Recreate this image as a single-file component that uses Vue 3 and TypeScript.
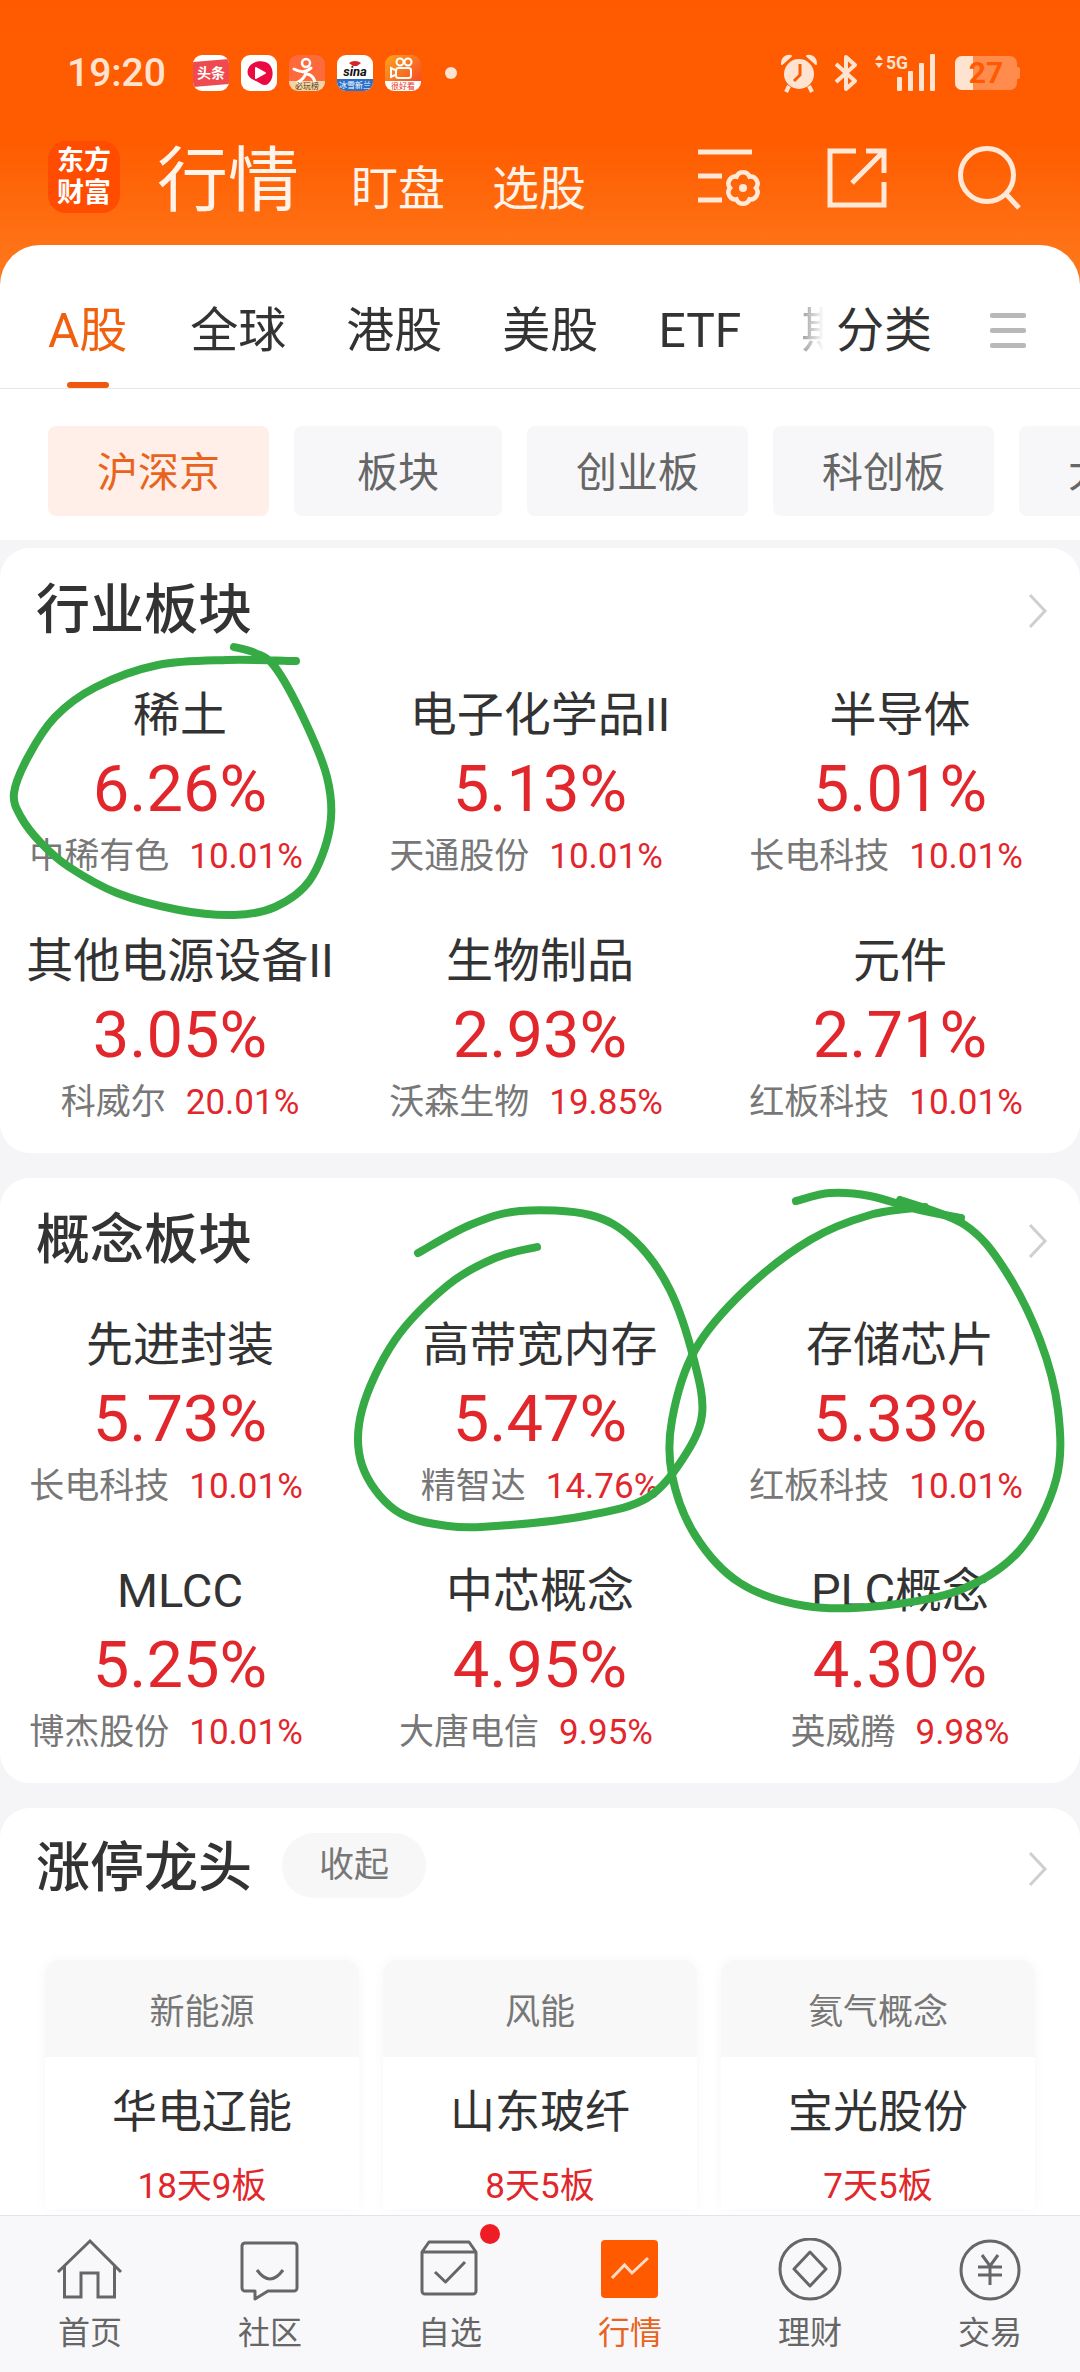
<script setup lang="ts">
type Quote = { name: string; pct: string; stock: string; stockPct: string }
type Lead = { group: string; name: string; streak: string }
type Pt = [number, number]

const tabs = ['全球', '港股', '美股', 'ETF', '期货']
const chips = ['板块', '创业板', '科创板', '大盘云图']

const industry: Quote[] = [
  { name: '稀土', pct: '6.26%', stock: '中稀有色', stockPct: '10.01%' },
  { name: '电子化学品II', pct: '5.13%', stock: '天通股份', stockPct: '10.01%' },
  { name: '半导体', pct: '5.01%', stock: '长电科技', stockPct: '10.01%' },
  { name: '其他电源设备II', pct: '3.05%', stock: '科威尔', stockPct: '20.01%' },
  { name: '生物制品', pct: '2.93%', stock: '沃森生物', stockPct: '19.85%' },
  { name: '元件', pct: '2.71%', stock: '红板科技', stockPct: '10.01%' }
]

const concept: Quote[] = [
  { name: '先进封装', pct: '5.73%', stock: '长电科技', stockPct: '10.01%' },
  { name: '高带宽内存', pct: '5.47%', stock: '精智达', stockPct: '14.76%' },
  { name: '存储芯片', pct: '5.33%', stock: '红板科技', stockPct: '10.01%' },
  { name: 'MLCC', pct: '5.25%', stock: '博杰股份', stockPct: '10.01%' },
  { name: '中芯概念', pct: '4.95%', stock: '大唐电信', stockPct: '9.95%' },
  { name: 'PLC概念', pct: '4.30%', stock: '英威腾', stockPct: '9.98%' }
]

const leaders: Lead[] = [
  { group: '新能源', name: '华电辽能', streak: '18天9板' },
  { group: '风能', name: '山东玻纤', streak: '8天5板' },
  { group: '氦气概念', name: '宝光股份', streak: '7天5板' }
]

// hand-drawn marks on the photo, smoothed through the sampled points
function smooth(pts: Pt[]): string {
  let d = `M${pts[0][0]} ${pts[0][1]}`
  for (let i = 0; i < pts.length - 1; i++) {
    const p0 = pts[Math.max(i - 1, 0)]
    const p1 = pts[i]
    const p2 = pts[i + 1]
    const p3 = pts[Math.min(i + 2, pts.length - 1)]
    const c1x = p1[0] + (p2[0] - p0[0]) / 6
    const c1y = p1[1] + (p2[1] - p0[1]) / 6
    const c2x = p2[0] - (p3[0] - p1[0]) / 6
    const c2y = p2[1] - (p3[1] - p1[1]) / 6
    d += ` C${c1x.toFixed(1)} ${c1y.toFixed(1)} ${c2x.toFixed(1)} ${c2y.toFixed(1)} ${p2[0]} ${p2[1]}`
  }
  return d
}

const marks = [
  smooth([[234, 647], [255, 653], [275, 667], [303, 717], [327, 777], [330, 827], [310, 880], [275, 907], [234, 915], [179, 910], [117, 893], [69, 867], [41, 843], [21, 817], [14, 793], [28, 757], [55, 717], [96, 687], [158, 665], [227, 660], [296, 661]]),
  smooth([[537, 1247], [495, 1258], [448, 1285], [395, 1340], [362, 1410], [362, 1465], [395, 1510], [448, 1526], [510, 1525], [590, 1515], [647, 1498], [682, 1460], [702, 1415], [694, 1360], [670, 1290], [634, 1240], [590, 1215], [520, 1211], [470, 1225], [418, 1253]]),
  smooth([[796, 1201], [830, 1193], [870, 1196], [916, 1209], [961, 1218]]),
  smooth([[925, 1207], [870, 1215], [810, 1240], [745, 1290], [695, 1350], [672, 1420], [672, 1475], [695, 1535], [740, 1583], [806, 1606], [880, 1606], [960, 1590], [1020, 1550], [1056, 1480], [1058, 1410], [1040, 1340], [1005, 1270], [965, 1225], [900, 1200]])
]
</script>

<template>
  <div class="page">
    <div class="scroll">
      <header class="top">
        <div class="status">
          <span class="time">19:20</span>
          <div class="apps">
            <svg class="app" viewBox="0 0 36 36">
              <rect width="36" height="36" fill="#fff" />
              <path d="M0 7 L36 4 V29 L0 32Z" fill="#ee4a50" />
              <text x="18" y="23" text-anchor="middle" font-size="14" font-weight="700" fill="#fff">头条</text>
            </svg>
            <svg class="app" viewBox="0 0 36 36">
              <rect width="36" height="36" fill="#fff" />
              <path d="M7 14 C10 6 22 4 28 9 C33 14 33 24 27 29 C23 32 19 28 15 26 C10 24 5 21 7 14Z" fill="#ea0a40" />
              <path d="M15 13 L24 18 L15 23Z" fill="#fff" stroke="#fff" stroke-width="2" stroke-linejoin="round" />
            </svg>
            <svg class="app" viewBox="0 0 36 36">
              <rect width="36" height="36" fill="#ff6a3c" />
              <rect y="26" width="36" height="10" fill="#f0d5a8" />
              <circle cx="17" cy="8" r="4" fill="none" stroke="#fff" stroke-width="2.5" />
              <path d="M5 14 C12 18 18 17 22 13 M17 17 C16 22 13 25 9 27 M18 19 C23 20 25 23 26 27" fill="none" stroke="#fff" stroke-width="3" stroke-linecap="round" />
              <text x="18" y="34" text-anchor="middle" font-size="8" fill="#5a3a10">必玩榜</text>
            </svg>
            <svg class="app" viewBox="0 0 36 36">
              <rect width="36" height="36" fill="#fff" />
              <rect y="24" width="36" height="12" fill="#2a6fc8" />
              <path d="M12 8 A8 6 0 0 1 24 8 L20 11 H16Z" fill="#d8232a" />
              <text x="18" y="21" text-anchor="middle" font-size="13" font-weight="700" font-style="italic" fill="#111">sina</text>
              <text x="18" y="33" text-anchor="middle" font-size="8" fill="#fff">冰雪新兰</text>
            </svg>
            <svg class="app" viewBox="0 0 36 36">
              <defs>
                <linearGradient id="ks" x1="0" y1="0" x2="1" y2="1">
                  <stop offset="0" stop-color="#ffa21a" />
                  <stop offset="1" stop-color="#f3402a" />
                </linearGradient>
              </defs>
              <rect width="36" height="36" fill="url(#ks)" />
              <rect y="26" width="36" height="10" fill="#fff" />
              <circle cx="15" cy="7" r="3.5" fill="none" stroke="#fff" stroke-width="2" />
              <circle cx="23" cy="7" r="3.5" fill="none" stroke="#fff" stroke-width="2" />
              <rect x="11" y="13" width="15" height="10" rx="2.5" fill="none" stroke="#fff" stroke-width="2" />
              <path d="M10 15 L6 13 V22 L10 20" fill="none" stroke="#fff" stroke-width="2" />
              <text x="18" y="34" text-anchor="middle" font-size="8" fill="#e8352a">很好看</text>
            </svg>
            <span class="dot"></span>
          </div>
          <div class="sys">
            <svg class="alarm" width="38" height="40" viewBox="0 0 38 40">
              <path d="M2 11 C2 5 6 2 11 3 Z M36 11 C36 5 32 2 27 3 Z" fill="#ffe3d1" stroke="#ffe3d1" stroke-width="2" stroke-linejoin="round" />
              <circle cx="19" cy="21" r="15" fill="#ffe3d1" />
              <path d="M20 11 V22 L14 28" fill="none" stroke="#ff5c00" stroke-width="3" />
              <path d="M9 33 L6 39 M29 33 L32 39" stroke="#ffe3d1" stroke-width="4" />
            </svg>
            <svg class="bt" width="24" height="38" viewBox="0 0 24 38">
              <path d="M2 10 L21 27 L12 35 V3 L21 11 L2 28" fill="none" stroke="#ffe3d1" stroke-width="4" stroke-linejoin="round" />
            </svg>
            <svg class="net" width="66" height="40" viewBox="0 0 66 40">
              <path d="M3 7 L7 2 L11 7Z M3 10 L7 15 L11 10Z" fill="#ffe3d1" />
              <text x="14" y="16" font-size="19" font-weight="700" textLength="22" lengthAdjust="spacingAndGlyphs" fill="#ffe3d1">5G</text>
              <rect x="25" y="24" width="5" height="14" rx="1" fill="#ffe3d1" />
              <rect x="36" y="18" width="5" height="20" rx="1" fill="#ffe3d1" />
              <rect x="47" y="10" width="5" height="28" rx="1" fill="#ffe3d1" />
              <rect x="58" y="1" width="5" height="37" rx="1" fill="#ffe3d1" />
            </svg>
            <div class="battery">
              <div class="cell-body">
                <span class="level"></span>
                <span class="num">27</span>
              </div>
              <i class="nub"></i>
            </div>
          </div>
        </div>

        <div class="bar">
          <div class="logo">东方<br />财富</div>
          <span class="big">行情</span>
          <span class="sub-nav first">盯盘</span>
          <span class="sub-nav">选股</span>
          <div class="actions">
            <svg width="66" height="62" viewBox="0 0 66 62" fill="none" stroke="#ffe8d8" stroke-width="5">
              <path d="M1 5 H55 M1 29 H25 M1 53 H25" />
              <path d="M59 41 A7 7 0 0 1 52.5 52.3 A7 7 0 0 1 39.5 52.3 A7 7 0 0 1 33 41 A7 7 0 0 1 39.5 29.7 A7 7 0 0 1 52.5 29.7 A7 7 0 0 1 59 41Z" stroke-width="4.5" />
              <circle cx="46" cy="41" r="4" fill="#ffe8d8" stroke="none" />
            </svg>
            <svg width="60" height="60" viewBox="0 0 60 60" fill="none" stroke="#ffe8d8" stroke-width="5">
              <path d="M29 3 H3 V57 H57 V34 M39 3 H57 V25 M57 3 L25 35" />
            </svg>
            <svg class="find" width="66" height="64" viewBox="0 0 66 64" fill="none" stroke="#ffe8d8" stroke-width="5">
              <circle cx="30" cy="29" r="26.5" />
              <path d="M49 48 L62 62" />
            </svg>
          </div>
        </div>
      </header>

      <div class="sheet">
        <nav class="tabs">
          <div class="tab-scroll">
            <span class="tab on">A股</span>
            <span v-for="t in tabs" :key="t" class="tab">{{ t }}</span>
          </div>
          <span class="tab fixed">分类</span>
          <div class="more"><i></i><i></i><i></i></div>
        </nav>

        <div class="chips">
          <span class="chip on">沪深京</span>
          <span v-for="c in chips" :key="c" class="chip">{{ c }}</span>
        </div>
      </div>

      <section class="card">
        <div class="card-head">
          <h2>行业板块</h2>
          <svg class="chev" width="20" height="36" viewBox="0 0 20 36"><path d="M2 2 L17 18 L2 34" fill="none" stroke="#cfcfd2" stroke-width="3" /></svg>
        </div>
        <div class="grid">
          <div v-for="q in industry" :key="q.name" class="cell">
            <div class="name">{{ q.name }}</div>
            <div class="pct">{{ q.pct }}</div>
            <div class="lead" :class="{ long: q.stock.length > 3 }"><span>{{ q.stock }}</span><b>{{ q.stockPct }}</b></div>
          </div>
        </div>
      </section>

      <section class="card">
        <div class="card-head">
          <h2>概念板块</h2>
          <svg class="chev" width="20" height="36" viewBox="0 0 20 36"><path d="M2 2 L17 18 L2 34" fill="none" stroke="#cfcfd2" stroke-width="3" /></svg>
        </div>
        <div class="grid">
          <div v-for="q in concept" :key="q.name" class="cell">
            <div class="name">{{ q.name }}</div>
            <div class="pct">{{ q.pct }}</div>
            <div class="lead" :class="{ long: q.stock.length > 3 }"><span>{{ q.stock }}</span><b>{{ q.stockPct }}</b></div>
          </div>
        </div>
      </section>

      <section class="card last">
        <div class="card-head">
          <h2>涨停龙头</h2>
          <span class="fold">收起</span>
          <svg class="chev" width="20" height="36" viewBox="0 0 20 36"><path d="M2 2 L17 18 L2 34" fill="none" stroke="#cfcfd2" stroke-width="3" /></svg>
        </div>
        <div class="leaders">
          <div v-for="l in leaders" :key="l.name" class="leader">
            <div class="leader-head">{{ l.group }}</div>
            <div class="leader-name">{{ l.name }}</div>
            <div class="leader-streak">{{ l.streak }}</div>
          </div>
        </div>
      </section>
    </div>

    <footer class="nav">
      <div class="nav-item">
        <svg width="72" height="64" viewBox="0 0 72 64" fill="none" stroke="#666" stroke-width="3">
          <path d="M4 34 L36 3 L67 34 M10.5 28 V59 H27 V35 H44 V59 H60.5 V28" />
        </svg>
        <span>首页</span>
      </div>
      <div class="nav-item">
        <svg width="72" height="64" viewBox="0 0 72 64" fill="none" stroke="#666" stroke-width="3" stroke-linejoin="round">
          <path d="M11 5 H60 a3 3 0 0 1 3 3 V50 a3 3 0 0 1 -3 3 H34 L21 61 V53 H11 a3 3 0 0 1 -3 -3 V8 a3 3 0 0 1 3 -3Z" />
          <path d="M23 32 Q36 50 49 32" />
        </svg>
        <span>社区</span>
      </div>
      <div class="nav-item">
        <svg width="72" height="64" viewBox="0 0 72 64" fill="none" stroke="#666" stroke-width="3" stroke-linejoin="round">
          <path d="M15 4 H55 L62 14 V53 a3 3 0 0 1 -3 3 H11 a3 3 0 0 1 -3 -3 V14Z M8 14 H62" />
          <path d="M21 34 L31.5 44 L51 24" />
        </svg>
        <span>自选</span>
        <i class="badge"></i>
      </div>
      <div class="nav-item on">
        <svg width="72" height="64" viewBox="0 0 72 64" fill="none">
          <rect x="7" y="2" width="57" height="58" rx="4" fill="#ff5a00" />
          <path d="M18 40 L30.5 27 L38 35 L54 20" stroke="#ffdcc5" stroke-width="3" />
        </svg>
        <span>行情</span>
      </div>
      <div class="nav-item">
        <svg width="72" height="64" viewBox="0 0 72 64" fill="none" stroke="#666" stroke-width="3" stroke-linejoin="round">
          <circle cx="36" cy="31" r="30" />
          <path d="M36 14 L52 31 L36 48 L20 31Z" />
        </svg>
        <span>理财</span>
      </div>
      <div class="nav-item">
        <svg width="72" height="64" viewBox="0 0 72 64" fill="none" stroke="#666" stroke-width="3">
          <circle cx="36" cy="32" r="29" />
          <path d="M28 17 L36 28 L44 17 M24 29 H48 M24 37 H48 M36 28 V47" />
        </svg>
        <span>交易</span>
      </div>
    </footer>

    <svg class="ink" width="1080" height="2372" viewBox="0 0 1080 2372" fill="none">
      <path v-for="(d, i) in marks" :key="i" :d="d" stroke="#36ab45" stroke-width="8" stroke-linecap="round" />
    </svg>
  </div>
</template>

<style scoped>
.page {
  position: relative;
  width: 1080px;
  height: 2372px;
  display: flex;
  flex-direction: column;
  overflow: hidden;
  background: #f5f5f7;
  font-family: Roboto, "Noto Sans CJK SC", sans-serif;
  color: #333;
}

.scroll {
  flex: 1;
  min-height: 0;
  overflow: hidden;
}

.top {
  height: 285px;
  margin-bottom: -40px;
  padding-top: 54px;
  box-sizing: border-box;
  background: linear-gradient(180deg, #ff5a00 0%, #ff5c00 50%, #ff7a1e 100%);
}

.status {
  display: flex;
  align-items: center;
  height: 38px;
  padding: 0 60px 0 67px;
  color: #ffe3d1;
}

.time {
  width: 126px;
  font-size: 39px;
  font-weight: 500;
  line-height: 38px;
}

.apps {
  display: flex;
  align-items: center;
  gap: 12px;
}

.app {
  width: 36px;
  height: 36px;
  border-radius: 9px;
  overflow: hidden;
}

.dot {
  width: 12px;
  height: 12px;
  margin-left: 12px;
  border-radius: 50%;
  background: #ffe3d1;
}

.sys {
  margin-left: auto;
  display: flex;
  align-items: center;
}

.bt {
  margin-left: 16px;
}

.net {
  margin-left: 14px;
}

.battery {
  display: flex;
  align-items: center;
  margin-left: 17px;
}

.cell-body {
  position: relative;
  width: 62px;
  height: 34px;
  border-radius: 7px;
  background: rgba(255, 255, 255, 0.3);
  overflow: hidden;
}

.nub {
  width: 3px;
  height: 12px;
  border-radius: 0 2px 2px 0;
  background: rgba(255, 255, 255, 0.3);
}

.level {
  position: absolute;
  left: 0;
  top: 0;
  bottom: 0;
  width: 18px;
  background: #ffe3d1;
}

.num {
  position: absolute;
  inset: 0;
  text-align: center;
  font-size: 30px;
  font-weight: 700;
  line-height: 34px;
  color: #ff5a00;
}

.bar {
  display: flex;
  align-items: flex-end;
  height: 72px;
  margin-top: 49px;
  padding: 0 57px 0 48px;
  color: #fff3ea;
}

.logo {
  width: 72px;
  height: 72px;
  border-radius: 18px;
  background: #ff4c00;
  color: #fff;
  font-size: 27px;
  font-weight: 700;
  line-height: 32px;
  text-align: center;
  padding-top: 4px;
  box-sizing: border-box;
}

.big {
  position: relative;
  top: 10px;
  margin-left: 37px;
  font-size: 71px;
  font-weight: 400;
  line-height: 84px;
}

.sub-nav {
  position: relative;
  top: 6px;
  margin-left: 47px;
  font-size: 47px;
  font-weight: 400;
  line-height: 60px;
}

.sub-nav.first {
  margin-left: 52px;
}

.actions {
  margin-left: auto;
  display: flex;
  align-items: center;
  gap: 64px;
  height: 70px;
}

.find {
  margin-left: 6px;
}

.sheet {
  position: relative;
  height: 295px;
  border-radius: 40px 40px 0 0;
  background: #fff;
}

.tabs {
  display: flex;
  height: 144px;
  padding: 58px 54px 0 48px;
  box-sizing: border-box;
  border-bottom: 1px solid #e6e6e8;
}

.tab-scroll {
  display: flex;
  gap: 60px;
  width: 776px;
  overflow: hidden;
  -webkit-mask-image: linear-gradient(90deg, #000 94%, transparent 100%);
  mask-image: linear-gradient(90deg, #000 94%, transparent 100%);
}

.tab {
  position: relative;
  flex: none;
  font-size: 48px;
  line-height: 56px;
  height: 85px;
  color: #333;
}

.tab.on {
  margin-right: 3px;
  color: #f0600f;
}

.tab.on::after {
  content: "";
  position: absolute;
  left: 19px;
  bottom: 0;
  width: 42px;
  height: 6px;
  border-radius: 3px;
  background: #f0580f;
}

.tab.fixed {
  margin-left: 12px;
}

.more {
  margin-left: auto;
  display: flex;
  flex-direction: column;
  gap: 10px;
  padding-top: 10px;
}

.more i {
  display: block;
  width: 36px;
  height: 5px;
  border-radius: 2px;
  background: #b8b8b8;
}

.chips {
  display: flex;
  gap: 25px;
  padding: 37px 0 0 48px;
  overflow: hidden;
}

.chip {
  flex: none;
  height: 90px;
  padding: 0 49px;
  border-radius: 8px;
  background: #f7f7f9;
  color: #666;
  font-size: 41px;
  line-height: 95px;
  text-align: center;
}

.chip:nth-child(2) {
  padding: 0 63px;
}

.chip.on {
  background: #ffefe8;
  color: #e8641e;
}

.card {
  margin-top: 25px;
  height: 605px;
  border-radius: 30px;
  background: #fff;
}

.sheet + .card {
  margin-top: 8px;
}

.card.last {
  height: 520px;
}

.card-head {
  display: flex;
  align-items: center;
  height: 122px;
  padding: 3px 32px 0 36px;
  box-sizing: border-box;
}

.card.last .card-head {
  padding-top: 0;
}

h2 {
  margin: 0;
  font-size: 54px;
  font-weight: 500;
  line-height: 70px;
  color: #333;
}

.chev {
  margin-left: auto;
}

.grid {
  display: grid;
  grid-template-columns: repeat(3, 360px);
  row-gap: 37px;
}

.cell {
  display: flex;
  flex-direction: column;
  align-items: center;
  height: 209px;
  padding-top: 17px;
  box-sizing: border-box;
}

.name {
  font-size: 47px;
  line-height: 56px;
  color: #333;
  white-space: nowrap;
}

.pct {
  margin-top: 8px;
  font-size: 65px;
  line-height: 76px;
  color: #e1262c;
}

.lead {
  display: flex;
  gap: 20px;
  margin-top: 8px;
  font-size: 35px;
  line-height: 44px;
  color: #777;
  white-space: nowrap;
}

.lead.long {
  margin-right: 28px;
}

.lead b {
  font-weight: 400;
  color: #e1262c;
}

.fold {
  width: 144px;
  height: 65px;
  margin: -8px 0 0 30px;
  border-radius: 32px;
  background: #f7f7f7;
  color: #777;
  font-size: 35px;
  line-height: 65px;
  text-align: center;
}

.leaders {
  display: grid;
  grid-template-columns: repeat(3, 314px);
  column-gap: 24px;
  margin-top: 30px;
  padding-left: 45px;
}

.leader {
  border-radius: 14px 14px 0 0;
  box-shadow: 0 0 12px rgba(0, 0, 0, 0.04);
  text-align: center;
}

.leader-head {
  height: 97px;
  border-radius: 14px 14px 0 0;
  background: #f8f8f8;
  color: #777;
  font-size: 35px;
  line-height: 106px;
}

.leader-name {
  margin-top: 28px;
  font-size: 45px;
  line-height: 56px;
  color: #333;
}

.leader-streak {
  margin-top: 24px;
  font-size: 35px;
  line-height: 44px;
  color: #e1262c;
}

.nav {
  flex: none;
  display: grid;
  grid-template-columns: repeat(6, 180px);
  height: 157px;
  box-sizing: border-box;
  border-top: 1px solid #e4e4e8;
  background: #f8f8fa;
}

.nav-item {
  position: relative;
  display: flex;
  flex-direction: column;
  align-items: center;
  padding-top: 22px;
  color: #666;
  font-size: 32px;
  line-height: 40px;
}

.nav-item span {
  margin-top: 11px;
}

.nav-item.on {
  color: #e8641e;
}

.badge {
  position: absolute;
  left: 120px;
  top: 8px;
  width: 20px;
  height: 20px;
  border-radius: 50%;
  background: #ee1c25;
}

.ink {
  position: absolute;
  left: 0;
  top: 0;
  pointer-events: none;
}
</style>

<style>
html,
body {
  margin: 0;
  background: #f5f5f7;
}
</style>
